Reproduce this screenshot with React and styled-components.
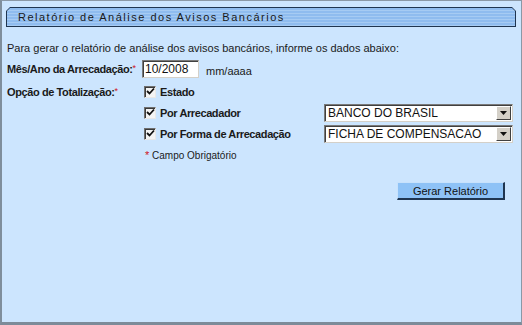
import React from "react";
import styled, { createGlobalStyle } from "styled-components";

const GlobalStyle = createGlobalStyle`
  body {
    margin: 0;
    background: #cce5fe;
    font-family: "Liberation Sans", Arial, sans-serif;
  }
`;

export default function App() {
  return (
    <>
      <GlobalStyle />
      <Panel>
        <TitleFrame>
          <TitleBar>Relatório de Análise dos Avisos Bancários</TitleBar>
        </TitleFrame>
        <Intro>
          Para gerar o relatório de análise dos avisos bancários, informe os
          dados abaixo:
        </Intro>
        <Row>
          <Label>
            Mês/Ano da Arrecadação:<Req>*</Req>
          </Label>
          <TextInput defaultValue="10/2008" />
          <Hint>mm/aaaa</Hint>
        </Row>
        <Row top>
          <Label>
            Opção de Totalização:<Req>*</Req>
          </Label>
          <Options>
            <Option>
              <Check />
              <OptionText>Estado</OptionText>
            </Option>
            <Option>
              <Check />
              <OptionText>Por Arrecadador</OptionText>
              <Select value="BANCO DO BRASIL" />
            </Option>
            <Option>
              <Check />
              <OptionText>Por Forma de Arrecadação</OptionText>
              <Select value="FICHA DE COMPENSACAO" />
            </Option>
            <Note>
              <Req>*</Req> Campo Obrigatório
            </Note>
          </Options>
        </Row>
        <Actions>
          <Button>Gerar Relatório</Button>
        </Actions>
      </Panel>
    </>
  );
}

function Check() {
  return (
    <Box>
      <svg width="9" height="9" viewBox="0 0 9 9">
        <path d="M1 4 L3.5 6.5 L8 1.5" stroke="#111" strokeWidth="1.8" fill="none" />
      </svg>
    </Box>
  );
}

function Select({ value }) {
  return (
    <SelectBox>
      <SelectValue>{value}</SelectValue>
      <Arrow>
        <svg width="7" height="4" viewBox="0 0 7 4">
          <path d="M0 0 H7 L3.5 4 Z" fill="#111" />
        </svg>
      </Arrow>
    </SelectBox>
  );
}

const Panel = styled.div`
  box-sizing: border-box;
  width: 522px;
  height: 325px;
  background: #cce5fe;
  border: 1px solid #8a98a6;
  border-left: 2px solid #7f8e9c;
  border-bottom: 3px solid #7d8b99;
  padding: 6px 4px 0 4px;
  color: #1a1a1a;
  font-size: 11px;
`;

const TitleFrame = styled.div`
  background: #1f3550;
  padding: 1px;
  height: 20px;
  box-sizing: border-box;
  margin-right: 1px;
  clip-path: polygon(4px 0, calc(100% - 4px) 0, 100% 4px, 100% 100%, 0 100%, 0 4px);
`;

const TitleBar = styled.div`
  height: 100%;
  display: flex;
  align-items: center;
  padding-left: 11px;
  letter-spacing: 1.5px;
  color: #1a1a1a;
  font-size: 11px;
  background: repeating-linear-gradient(
    to bottom,
    #8fbcef 0,
    #8fbcef 2px,
    #a6cbf3 2px,
    #a6cbf3 3px
  );
  clip-path: polygon(3px 0, calc(100% - 3px) 0, 100% 3px, 100% 100%, 0 100%, 0 3px);
`;

const Intro = styled.p`
  margin: 15px 0 0 1px;
  line-height: 13px;
`;

const Row = styled.div`
  display: flex;
  align-items: ${(p) => (p.top ? "flex-start" : "center")};
  margin-top: ${(p) => (p.top ? "7px" : "5px")};
  padding-left: 1px;
`;

const Label = styled.div`
  width: 135px;
  flex-shrink: 0;
  font-weight: bold;
  letter-spacing: -0.4px;
  white-space: nowrap;
  line-height: 13px;
`;

const Req = styled.span`
  color: #d0101a;
  font-weight: normal;
  font-size: 9px;
  letter-spacing: 0;
  vertical-align: 2px;
`;

const TextInput = styled.input`
  box-sizing: border-box;
  width: 57px;
  height: 18px;
  margin: 0;
  padding: 0 2px;
  font-family: "Liberation Sans", Arial, sans-serif;
  font-size: 12px;
  color: #111;
  background: #fff;
  border: 1px solid #7a7a7a;
  border-right-color: #d4d0c8;
  border-bottom-color: #d4d0c8;
  box-shadow: inset 1px 1px 0 #404040;
`;

const Hint = styled.span`
  margin-left: 7px;
  padding-top: 4px;
`;

const Options = styled.div`
  display: flex;
  flex-direction: column;
  margin-top: -4px;
  padding-left: 2px;
  flex: 1;
`;

const Option = styled.div`
  display: flex;
  align-items: center;
  height: 21px;
`;

const Box = styled.span`
  box-sizing: border-box;
  width: 12px;
  height: 12px;
  display: flex;
  align-items: center;
  justify-content: center;
  background: #f4f4f4;
  border: 1px solid #6f6f6f;
  border-right-color: #e8e8e8;
  border-bottom-color: #e8e8e8;
  box-shadow: inset 1px 1px 0 #3a3a3a;
`;

const OptionText = styled.span`
  font-weight: bold;
  letter-spacing: -0.4px;
  margin-left: 4px;
  width: 164px;
`;

const SelectBox = styled.div`
  box-sizing: border-box;
  width: 189px;
  height: 18px;
  display: flex;
  align-items: center;
  background: #fff;
  border: 1px solid #7a7a7a;
  border-right-color: #d4d0c8;
  border-bottom-color: #d4d0c8;
  box-shadow: inset 1px 1px 0 #404040;
  padding: 1px 1px 1px 3px;
`;

const SelectValue = styled.span`
  flex: 1;
  font-size: 12px;
  color: #111;
  white-space: nowrap;
  overflow: hidden;
`;

const Arrow = styled.span`
  box-sizing: border-box;
  width: 15px;
  height: 14px;
  display: flex;
  align-items: center;
  justify-content: center;
  background: #d4d0c8;
  border: 1px solid #fff;
  border-right-color: #404040;
  border-bottom-color: #404040;
`;

const Note = styled.div`
  margin-top: 5px;
  padding-left: 1px;
  font-size: 10px;
  color: #1a1a1a;
  ${Req} {
    font-size: 11px;
    vertical-align: 0;
  }
`;

const Actions = styled.div`
  display: flex;
  justify-content: flex-end;
  margin-top: 21px;
  padding-right: 12px;
`;

const Button = styled.button`
  box-sizing: border-box;
  flex: 0 0 108px;
  width: 108px;
  height: 18px;
  padding: 0;
  font-family: "Liberation Sans", Arial, sans-serif;
  font-size: 11px;
  color: #111;
  background: #8ec2f6;
  border: 1px solid #c8e2fc;
  border-right: 2px solid #1f3550;
  border-bottom: 2px solid #1f3550;
`;
